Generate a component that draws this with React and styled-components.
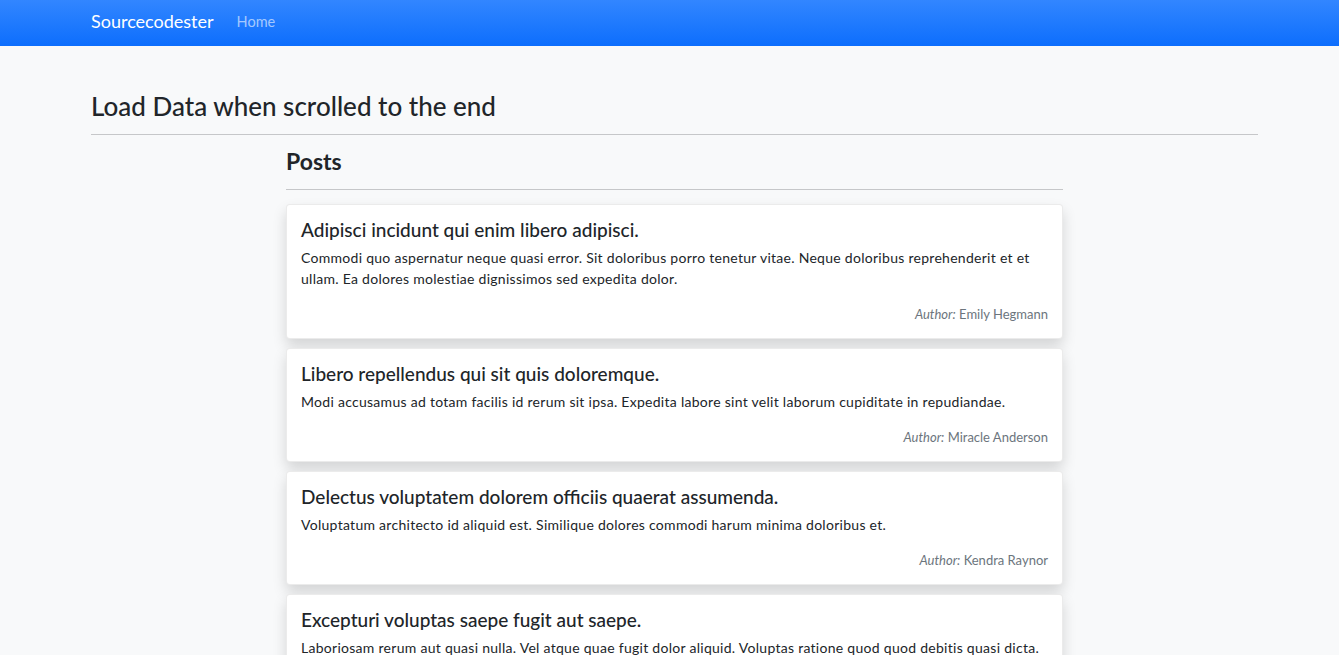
import React from "react";
import styled, { createGlobalStyle } from "styled-components";

const Global = createGlobalStyle`
  html, body { margin: 0; padding: 0; }
  body {
    background: #f8f9fa;
    font-family: Lato, "Open Sans", "Noto Sans", sans-serif;
    color: #212529;
    font-size: 14px;
    line-height: 21px;
  }
  * { box-sizing: border-box; }
`;

const Navbar = styled.nav`
  height: 46px;
  background: linear-gradient(180deg, #3286ff 0%, #0d6efd 100%);
  display: flex;
  align-items: center;
  padding: 0 91px 3px;
`;

const Brand = styled.a`
  color: #fff;
  font-size: 18px;
  margin-right: 23px;
  text-decoration: none;
`;

const NavLink = styled.a`
  color: rgba(255, 255, 255, 0.6);
  font-size: 14.5px;
  text-decoration: none;
`;

const Container = styled.main`
  margin-left: 91px;
  width: 1167px;
  padding-top: 44px;
`;

const Title = styled.h3`
  margin: 0;
  font-size: 26px;
  font-weight: 500;
  line-height: 32px;
`;

const Rule = styled.hr`
  border: 0;
  border-top: 1px solid #c6c7c9;
  margin: ${(p) => p.$m || "12px 0 0"};
`;

const Column = styled.section`
  width: 777px;
  margin: 0 auto;
  padding-top: 12px;
`;

const SectionTitle = styled.h4`
  margin: 0;
  font-size: 23px;
  font-weight: 700;
  line-height: 28px;
`;

const PostList = styled.div`
  display: flex;
  flex-direction: column;
  gap: 9px;
  margin-top: 14px;
`;

const Card = styled.article`
  background: #fff;
  border: 1px solid rgba(0, 0, 0, 0.08);
  border-radius: 4px;
  box-shadow: 0 7px 14px rgba(0, 0, 0, 0.15);
  padding: 13px 14px 15px;
`;

const CardTitle = styled.h5`
  margin: 0 0 6px;
  font-size: 19px;
  font-weight: 500;
  line-height: 23px;
`;

const CardText = styled.p`
  margin: 0;
  font-size: 14px;
  line-height: 21px;
  letter-spacing: 0.28px;
`;

const Byline = styled.div`
  text-align: right;
  color: #6c757d;
  font-size: 13px;
  line-height: 18px;
  margin-top: 16px;

  em { font-style: italic; }
`;

const posts = [
  {
    title: "Adipisci incidunt qui enim libero adipisci.",
    body:
      "Commodi quo aspernatur neque quasi error. Sit doloribus porro tenetur vitae. Neque doloribus reprehenderit et et ullam. Ea dolores molestiae dignissimos sed expedita dolor.",
    author: "Emily Hegmann",
  },
  {
    title: "Libero repellendus qui sit quis doloremque.",
    body:
      "Modi accusamus ad totam facilis id rerum sit ipsa. Expedita labore sint velit laborum cupiditate in repudiandae.",
    author: "Miracle Anderson",
  },
  {
    title: "Delectus voluptatem dolorem officiis quaerat assumenda.",
    body:
      "Voluptatum architecto id aliquid est. Similique dolores commodi harum minima doloribus et.",
    author: "Kendra Raynor",
  },
  {
    title: "Excepturi voluptas saepe fugit aut saepe.",
    body:
      "Laboriosam rerum aut quasi nulla. Vel atque quae fugit dolor aliquid. Voluptas ratione quod quod debitis quasi dicta.",
    author: "Kendra Raynor",
  },
];

export default function App() {
  return (
    <>
      <Global />
      <Navbar>
        <Brand href="#">Sourcecodester</Brand>
        <NavLink href="#">Home</NavLink>
      </Navbar>
      <Container>
        <Title>Load Data when scrolled to the end</Title>
        <Rule />
        <Column>
          <SectionTitle>Posts</SectionTitle>
          <Rule $m="14px 0 0" />
          <PostList>
            {posts.map((p, i) => (
              <Card key={i}>
                <CardTitle>{p.title}</CardTitle>
                <CardText>{p.body}</CardText>
                <Byline>
                  <em>Author:</em> {p.author}
                </Byline>
              </Card>
            ))}
          </PostList>
        </Column>
      </Container>
    </>
  );
}
